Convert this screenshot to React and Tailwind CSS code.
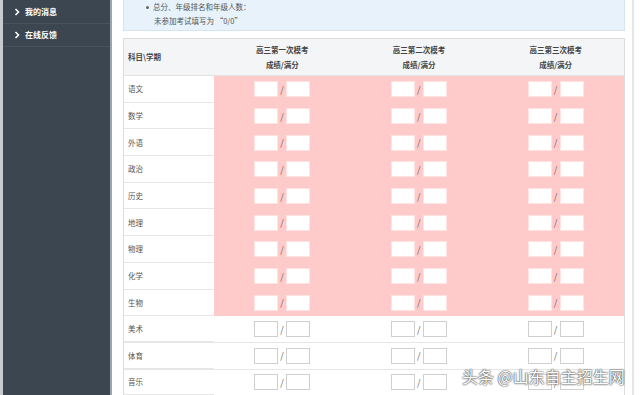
import React from 'react';

const subjects = ['语文', '数学', '外语', '政治', '历史', '地理', '物理', '化学', '生物', '美术', '体育', '音乐'];
const exams = ['高三第一次模考', '高三第二次模考', '高三第三次模考'];

const ScoreCell = ({ pink }) => (
  <div className={`flex items-center justify-center gap-[2px] ${pink ? 'bg-[#ffcaca]' : 'bg-white'}`}>
    <div className={`h-[16px] w-[24px] bg-white ${pink ? 'border border-[#ffe2e2]' : 'border border-[#cfcfcf]'}`} />
    <span className="w-[4px] text-[9px] leading-none text-[#666]">/</span>
    <div className={`h-[16px] w-[24px] bg-white ${pink ? 'border border-[#ffe2e2]' : 'border border-[#cfcfcf]'}`} />
  </div>
);

const Chevron = () => (
  <svg width="6" height="8" viewBox="0 0 6 8" className="shrink-0">
    <path d="M1.5 1 L4.5 4 L1.5 7" fill="none" stroke="#fff" strokeWidth="1.6" />
  </svg>
);

const App = () => {
  return (
    <div className="flex h-[395px] w-[640px] overflow-hidden bg-white font-['Noto_Sans_CJK_SC',sans-serif]">
      <div className="w-[112px] shrink-0 border-l-[3px] border-r-2 border-l-[#c6cbd0] border-r-[#9aa5ae] bg-[#3b4650] pt-[1px]">
        <div className="flex h-[23px] items-center gap-[5px] border-b border-[#46525c] pl-[11px] text-[8px] font-bold text-white">
          <Chevron />我的消息
        </div>
        <div className="flex h-[23px] items-center gap-[5px] border-b border-[#46525c] pl-[11px] text-[8px] font-bold text-white">
          <Chevron />在线反馈
        </div>
      </div>

      <div className="flex flex-1 pl-[11px]">
        <div className="w-[502px]">
          <div className="h-[31px] border-x border-b border-[#d4e4f1] bg-[#e7f2fa] pl-[25px] text-[7.5px] leading-[14px] text-[#555]">
            <div className="-ml-[3px] flex items-center gap-[4px]">
              <span className="h-[3px] w-[3px] rounded-full bg-[#666]" />
              总分、年级排名和年级人数：
            </div>
            <div className="pl-[5px]">未参加考试填写为 “0/0”</div>
          </div>

          <div className="mt-[7px] border border-[#dcdcdc]">
            <div className="grid h-[37px] grid-cols-[90px_1fr_1fr_1fr] border-b border-[#e2e2e2] bg-[#f4f5f6] text-[7.5px] font-bold text-[#444]">
              <div className="flex items-center pl-[4px]">科目\学期</div>
              {exams.map((e) => (
                <div key={e} className="flex flex-col items-center justify-center leading-[15px]">
                  <span>{e}</span>
                  <span>成绩/满分</span>
                </div>
              ))}
            </div>
            {subjects.map((s, i) => {
              const pink = i < 9;
              return (
                <div
                  key={s}
                  className={`grid h-[26.7px] grid-cols-[90px_1fr_1fr_1fr] ${pink ? '' : 'border-b border-[#e6e6e6]'}`}
                >
                  <div className="flex items-center border-b border-[#e6e6e6] pl-[4px] text-[7.5px] text-[#555]">{s}</div>
                  <ScoreCell pink={pink} />
                  <ScoreCell pink={pink} />
                  <ScoreCell pink={pink} />
                </div>
              );
            })}
          </div>
        </div>
        <div className="ml-[7px] w-[2px] bg-[#e4e7ea]" />
      </div>

      <div className="absolute left-[462px] top-[366px] text-[16px] leading-[20px] text-white [text-shadow:0_0_2px_#333,0_0_1px_#333]">
        头条 @山东自主招生网
      </div>
    </div>
  );
};

export default App;
